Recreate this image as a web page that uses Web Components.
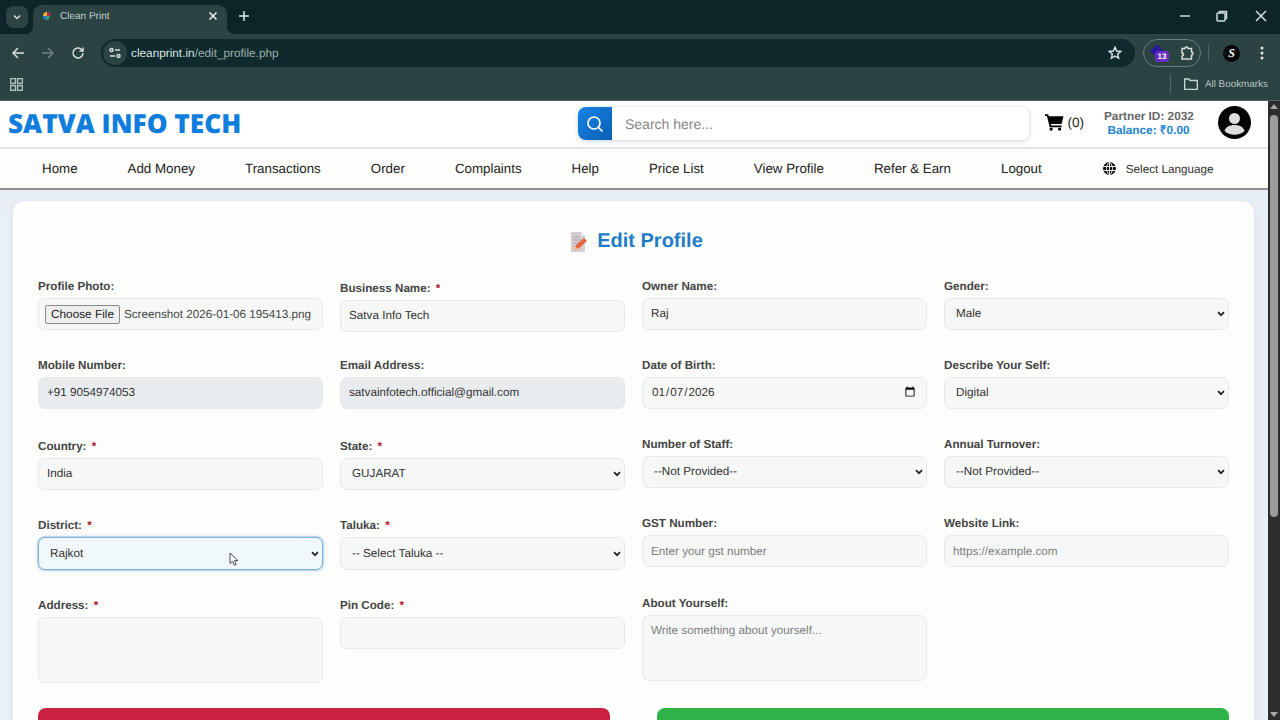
<!DOCTYPE html>
<html lang="en">
<head>
<meta charset="utf-8">
<title>Clean Print</title>
<style>
  html, body { margin: 0; height: 720px; overflow: hidden; background: #e9f0f5; font-family: "Liberation Sans", Arial, sans-serif; text-rendering: geometricPrecision; }
  body { display: flex; flex-direction: column; }
</style>
</head>
<body>
<browser-chrome></browser-chrome>
<page-frame>
  <site-header></site-header>
  <site-nav></site-nav>
  <edit-profile></edit-profile>
</page-frame>

<script>
class BrowserChrome extends HTMLElement {
  connectedCallback() {
    this.attachShadow({ mode: 'open' });
    this.shadowRoot.innerHTML = `
      <style>
        :host { display: block; flex: none; height: 101px; background: #2b4343; color: #d5dede; font-size: 12px; border-bottom: 1px solid #4f6666; box-sizing: border-box; }
        svg { display: block; flex: none; fill: none; stroke: currentColor; stroke-width: 1.5; }
        .strip { height: 34px; background: #0b2528; display: flex; align-items: flex-end; padding-left: 6px; }
        .list { width: 22px; height: 22px; margin-bottom: 6px; border-radius: 7px; background: #2b4343; display: flex; align-items: center; justify-content: center; }
        .tab { position: relative; width: 194px; height: 29px; margin-left: 5px; box-sizing: border-box; padding: 0 9px 7px 9px; background: #2b4343; border-radius: 9px 9px 0 0; display: flex; align-items: center; gap: 8px; color: #c5d0d0; font-size: 10px; }
        .tab::before, .tab::after { content: ""; position: absolute; bottom: 0; width: 8px; height: 8px; }
        .tab::before { left: -8px; background: radial-gradient(circle at 0 0, #0b2528 8px, #2b4343 8.5px); }
        .tab::after { right: -8px; background: radial-gradient(circle at 100% 0, #0b2528 8px, #2b4343 8.5px); }
        .tab span { flex: 1; padding-top: 1px; }
        .plus { margin: 0 0 13px 12px; }
        .win { margin: 0 13px 12px auto; display: flex; align-items: center; }
        .bar { height: 38px; display: flex; align-items: center; padding-left: 11px; }
        .nav-btn { width: 30px; display: flex; }
        .omni { width: 1034px; height: 28px; box-sizing: border-box; border-radius: 14px; background: #0f2a2d; display: flex; align-items: center; padding: 0 13px 0 2px; }
        .info { width: 24px; height: 24px; border-radius: 50%; background: #2b4343; display: flex; align-items: center; justify-content: center; margin-right: 4px; }
        .url { flex: 1; font-size: 11.8px; color: #9fb0b0; }
        .url b { font-weight: 400; color: #dbe3e3; }
        .ext { margin-left: 8px; width: 58px; height: 28px; box-sizing: border-box; border: 1px solid #687e7e; border-radius: 14px; display: flex; align-items: center; justify-content: space-between; padding: 0 5px 0 7px; }
        .gem { position: relative; width: 16px; height: 16px; }
        .gem i { position: absolute; left: 0; top: 0; width: 12px; height: 12px; background: #2b1a9c; transform: rotate(45deg) scale(.8); }
        .gem em { position: absolute; left: 4px; top: 6px; width: 14px; height: 11px; border-radius: 3px; background: #6a2fc0; color: #fff; font: 700 8px/11px "Liberation Sans", sans-serif; text-align: center; }
        .sep { width: 1px; height: 16px; background: #4d6464; margin-left: 7px; }
        .me { margin-left: 14px; width: 17px; height: 17px; border-radius: 50%; background: #050505; color: #fff; font: italic 700 12px/17px "Liberation Serif", serif; text-align: center; }
        .dots { margin-left: 20px; }
        .marks { height: 24px; display: flex; align-items: center; padding: 0 12px 0 10px; }
        .marks .sep { margin-left: auto; margin-right: 13px; height: 18px; }
        .marks span { margin-left: 7px; font-size: 9.9px; color: #b7c4c4; }
      </style>
      <div class="strip">
        <div class="list"><svg width="10" height="10" viewBox="0 0 10 10" stroke-width="1.8"><path d="M2 3.5 5 6.5 8 3.5"/></svg></div>
        <div class="tab">
          <svg width="10" height="10" viewBox="0 0 10 10" style="stroke:none"><path fill="#e0b92c" d="M1 5a4 4 0 0 1 4-4v4z"/><path fill="#b02a5a" d="M5 1a4 4 0 0 1 4 4H5z"/><path fill="#2e7dbd" d="M1 5h4v4a4 4 0 0 1-4-4z"/><path fill="#36a46a" d="M5 5h2.5a2.5 4 0 0 1-2.500 4z"/></svg>
          <span>Clean Print</span>
          <svg width="10" height="10" viewBox="0 0 10 10" stroke-width="1.6" style="color:#eef3f3"><path d="M1.500 1.500 8.500 8.500M8.500 1.500 1.500 8.500"/></svg>
        </div>
        <svg class="plus" style="color:#e4ebeb" width="10" height="10" viewBox="0 0 10 10" stroke-width="1.600"><path d="M5 0v10M0 5h10"/></svg>
        <div class="win">
          <svg width="12" height="12" viewBox="0 0 12 12" stroke-width="1"><path d="M1 6h10"/></svg>
          <svg width="12" height="12" viewBox="0 0 12 12" stroke-width="1" style="margin:0 27px 0 25px"><rect x="1" y="3" width="8" height="8" rx="1"/><path d="M3.500 3V1.500h7v7H9"/></svg>
          <svg width="12" height="12" viewBox="0 0 12 12" stroke-width="1"><path d="M1 1 11 11M11 1 1 11"/></svg>
        </div>
      </div>
      <div class="bar">
        <div class="nav-btn"><svg width="14" height="14" viewBox="0 0 14 14"><path d="M13 7H2M7 2 2 7l5 5"/></svg></div>
        <div class="nav-btn" style="color:#6d8383"><svg width="14" height="14" viewBox="0 0 14 14"><path d="M1 7h11M7 2l5 5-5 5"/></svg></div>
        <div class="nav-btn"><svg width="14" height="14" viewBox="0 0 14 14"><path d="M12 7a5 5 0 1 1-1.500-3.600L12 5M12 1.500V5H8.500"/></svg></div>
        <div class="omni">
          <div class="info"><svg width="12" height="12" viewBox="0 0 12 12" stroke-width="1.200"><circle cx="2.500" cy="3" r="1.500"/><path d="M6 3h5M1 9h5"/><circle cx="9.500" cy="9" r="1.500"/></svg></div>
          <div class="url"><b>cleanprint.in</b>/edit_profile.php</div>
          <svg width="14" height="14" viewBox="0 0 14 14" stroke-width="1.300"><path d="M7 1.300 8.700 5l4 .4-3 2.700.900 4L7 10l-3.600 2.100.9-4-3-2.700 4-.4z"/></svg>
        </div>
        <div class="ext">
          <div class="gem"><i></i><em>13</em></div>
          <svg width="16" height="16" viewBox="0 0 16 16" stroke-width="1.300"><path d="M3 3.500h3a1.500 1.500 0 0 1 3 0h3.500V7a1.500 1.500 0 0 1 0 3v4H3v-3a1.500 1.500 0 0 0 0-3z"/></svg>
        </div>
        <div class="sep"></div>
        <div class="me">S</div>
        <svg class="dots" width="4" height="14" viewBox="0 0 4 14" style="stroke:none;fill:#dfe7e7"><circle cx="2" cy="2" r="1.500"/><circle cx="2" cy="7" r="1.500"/><circle cx="2" cy="12" r="1.500"/></svg>
      </div>
      <div class="marks">
        <svg width="13" height="13" viewBox="0 0 13 13" stroke-width="1.200" style="color:#aebcbc"><rect x=".6" y=".6" width="4.800" height="4.800"/><rect x="7.600" y=".6" width="4.800" height="4.800"/><rect x=".6" y="7.600" width="4.800" height="4.800"/><rect x="7.600" y="7.600" width="4.800" height="4.800"/></svg>
        <div class="sep"></div>
        <svg width="14" height="12" viewBox="0 0 14 12" stroke-width="1.100" style="color:#c8d3d3"><path d="M.6 1h4.200l1.300 1.500h7.300v8.900H.6z"/></svg>
        <span>All Bookmarks</span>
      </div>`;
  }
}

// page area next to the fake scrollbar
class PageFrame extends HTMLElement {
  connectedCallback() {
    this.attachShadow({ mode: 'open' });
    this.shadowRoot.innerHTML = `
      <style>
        :host { display: flex; flex: 1; min-height: 0; }
        .page { flex: 1; min-width: 0; overflow: hidden; background: #e9f0f5; }
        .track { flex: none; width: 12px; background: #2c2c2c; display: flex; flex-direction: column; align-items: center; justify-content: space-between; padding: 3px 0; box-sizing: border-box; position: relative; }
        .track i { width: 0; height: 0; border: 4px solid transparent; border-top: 0; border-bottom: 5px solid #a5a5a5; }
        .track i:last-child { transform: rotate(180deg); }
        .thumb { flex: none; position: absolute; top: 14px; left: 2px; width: 8px; height: 402px; border-radius: 4px; background: #9c9c9c; }
      </style>
      <div class="page"><slot></slot></div>
      <div class="track"><i></i><div class="thumb"></div><i></i></div>`;
  }
}

class SiteHeader extends HTMLElement {
  connectedCallback() {
    this.attachShadow({ mode: 'open' });
    this.shadowRoot.innerHTML = `
      <style>
        :host { display: flex; align-items: center; height: 48px; box-sizing: border-box; border-bottom: 2px solid #e4e4e4; background: #fff; padding-left: 8px; }
        .logo { width: 570px; flex: none; margin-bottom: 2px; font: 800 26.2px/1 "Open Sans", sans-serif; color: #0f7ddb; white-space: nowrap; }
        .search { width: 451px; height: 33px; flex: none; margin-bottom: 1px; display: flex; border-radius: 8px; box-shadow: 0 1px 5px rgba(40,90,140,.28); background: #fff; }
        .search button { width: 34px; border: 0; padding: 0; border-radius: 8px 0 0 8px; background: linear-gradient(135deg, #1884e6, #0a5fb4); color: #fff; display: flex; align-items: center; justify-content: center; }
        .search input { flex: 1; min-width: 0; border: 0; outline: 0; background: none; padding: 0 13px; font: 14px "Liberation Sans", sans-serif; color: #333; text-rendering: geometricPrecision; }
        .search input::placeholder { color: #868686; }
        .cart { margin: 0 0 4px 16px; width: 39px; flex: none; display: flex; align-items: center; gap: 4px; font-size: 13.5px; color: #222; }
        .partner { margin: 0 0 2px 20px; width: 89px; flex: none; text-align: center; font-size: 11.8px; font-weight: 700; line-height: 14px; color: #666; white-space: nowrap; }
        .partner div { color: #2384cf; }
        .avatar { margin: 0 0 4px 25px; flex: none; display: block; }
      </style>
      <div class="logo">SATVA INFO TECH</div>
      <div class="search">
        <button aria-label="Search"><svg width="18" height="18" viewBox="0 0 18 18" fill="none" stroke="currentColor" stroke-width="1.700"><circle cx="8" cy="8" r="6"/><path d="m12.500 12.500 4 4"/></svg></button>
        <input placeholder="Search here...">
      </div>
      <div class="cart">
        <svg width="19" height="17" viewBox="0 0 19 17"><path fill="#050505" d="M0 0h3.300l.6 2H19l-2 8H6l.4 1.700H17v1.800H4.900L2 1.800H0z"/><circle cx="6.300" cy="15.300" r="1.700"/><circle cx="15" cy="15.300" r="1.700"/></svg>
        <span>(0)</span>
      </div>
      <div class="partner">Partner ID: 2032<div>Balance: ₹0.00</div></div>
      <svg class="avatar" width="33" height="33" viewBox="0 0 33 33"><circle cx="16.500" cy="16.500" r="16.500" fill="#040404"/><circle cx="16.500" cy="12.500" r="5.500" fill="#dedede"/><path fill="#dedede" d="M6.500 25c1-4 5-6 10-6s9 2 10 6c-2.500 2.500-6 3.800-10 3.800S9 27.500 6.500 25z"/></svg>`;
  }
}

class SiteNav extends HTMLElement {
  connectedCallback() {
    const links = ['Home', 'Add Money', 'Transactions', 'Order', 'Complaints', 'Help', 'Price List', 'View Profile', 'Refer & Earn', 'Logout'];
    this.attachShadow({ mode: 'open' });
    this.shadowRoot.innerHTML = `
      <style>
        :host { display: flex; align-items: center; gap: 50px; height: 41px; box-sizing: border-box; padding-left: 42px; border-bottom: 2px solid #8f8f8f; background: #fdfefc; font-size: 13.33px; color: #222; }
        a { color: inherit; text-decoration: none; white-space: nowrap; }
        .lang { margin-left: 11px; display: flex; align-items: center; gap: 10px; font-size: 11.7px; color: #333; }
        .lang span { padding-top: 1px; }
      </style>
      ${links.map(l => `<a href="#">${l.replace('&', '&amp;')}</a>`).join('')}
      <div class="lang">
        <svg width="13" height="13" viewBox="0 0 13 13"><circle cx="6.500" cy="6.500" r="6.500" fill="#111"/><path fill="none" stroke="#fdfefc" stroke-width=".9" d="M0 4.500h13M0 8.500h13M6.500 0v13M6.500 0c-4 3.500-4 9.500 0 13M6.500 0c4 3.500 4 9.500 0 13"/></svg>
        <span>Select Language</span>
      </div>`;
  }
}

class FormField extends HTMLElement {
  connectedCallback() {
    const req = this.hasAttribute('required');
    this.attachShadow({ mode: 'open' });
    this.shadowRoot.innerHTML = `
      <style>
        :host { display: flex; flex-direction: column; gap: 3px; }
        label { padding-top: 1px; font-size: 11.65px; line-height: 16px; font-weight: 700; color: #444; }
        b { color: #b5142f; margin-left: 2px; }
      </style>
      <label>${this.getAttribute('label')}${req ? '<b>*</b>' : ''}</label>
      <slot></slot>`;
  }
}

class EditProfile extends HTMLElement {
  connectedCallback() {
    this.attachShadow({ mode: 'open' });
    this.shadowRoot.innerHTML = `
      <style>
        :host { display: block; margin: 11px 14px 0 13px; padding: 25px 25px 0; border-radius: 12px; background: #fdfefc; box-shadow: 0 2px 8px rgba(60,100,140,.10); position: relative; }
        h1 { margin: 0 0 22px; height: 29px; padding: 1px 0 0 6px; display: flex; align-items: center; justify-content: center; gap: 9px; font-size: 20px; font-weight: 700; color: #1f7cc7; }
        .grid { display: grid; grid-template-columns: repeat(4, 285px); column-gap: 17px; align-items: start; }
        .col { display: flex; flex-direction: column; gap: 27px; }
        .ctl { display: block; width: 100%; height: 32px; box-sizing: border-box; margin: 0; border: 1px solid #e6e9e8; border-radius: 7px; background: #f6f8f7; padding: 0 8px 2px; font: 11.7px "Liberation Sans", sans-serif; color: #333; outline: 0; text-rendering: geometricPrecision; }
        .ctl:placeholder-shown { padding-bottom: 0; }
        select.ctl { appearance: none; padding-left: 11px; background-image: url("data:image/svg+xml,%3Csvg xmlns='http://www.w3.org/2000/svg' width='8' height='6' viewBox='0 0 8 6'%3E%3Cpath d='M1 1.200 4 4.200 7 1.200' fill='none' stroke='%23222' stroke-width='1.700'/%3E%3C/svg%3E"); background-repeat: no-repeat; background-position: right 3px center; }
        .ctl::placeholder { color: #7d7d7d; }
        .ctl[disabled] { background: #e9ecef; color: #333; opacity: 1; }
        .tall, .tall:placeholder-shown { height: 66px; padding: 8px; resize: none; }
        .file { display: flex; align-items: center; gap: 4px; white-space: nowrap; padding: 0 6px; color: #444; }
        .file button { height: 19px; padding: 0 5px; border: 1px solid #8a8a8a; border-radius: 2px; background: #efefef; font: 11.8px "Liberation Sans", sans-serif; color: #222; text-rendering: geometricPrecision; }
        select.focus { height: 33px; padding-bottom: 0; border-color: #7db0da; background-color: #f1f8fb; box-shadow: 0 0 0 1px rgba(125,176,218,.35), 0 0 4px rgba(125,176,218,.5); }
        select.h33 { height: 33px; padding-bottom: 0; }
        .cursor { position: absolute; left: 216px; top: 351px; }
        .actions { display: grid; grid-template-columns: 572px 572px; column-gap: 47px; margin-top: 25px; }
        .actions div { height: 44px; border-radius: 8px; }
        .red { background: #c9213f; }
        .green { background: #2eb446; }
      </style>
      <h1>
        <svg width="18" height="20" viewBox="0 0 18 20"><path fill="#d6ced4" d="M1 0h10l4 4v16H1z"/><path fill="#efe9ec" d="M11 0l4 4h-4z"/><path stroke="#a9a1aa" stroke-width="1" d="M3 5h7M3 8h9M3 11h6"/><path fill="#e8663c" d="M5 14 14 6l3 3-9 8-4 1z"/><path fill="#f3c9a5" d="M5 14l3 3-4 1z"/></svg>
        Edit Profile
      </h1>
      <div class="grid">
        <div class="col">
          <form-field label="Profile Photo:"><div class="ctl file"><button type="button">Choose File</button><span>Screenshot 2026-01-06 195413.png</span></div></form-field>
          <form-field label="Mobile Number:"><input class="ctl" disabled value="+91 9054974053"></form-field>
          <form-field label="Country: " required style="margin-top:2px"><input class="ctl" value="India"></form-field>
          <form-field label="District: " required><select class="ctl focus"><option>Rajkot</option></select></form-field>
          <form-field label="Address: " required><textarea class="ctl tall"></textarea></form-field>
        </div>
        <div class="col" style="padding-top:2px">
          <form-field label="Business Name: " required><input class="ctl" value="Satva Info Tech"></form-field>
          <form-field label="Email Address:" style="margin-top:-2px"><input class="ctl" disabled value="satvainfotech.official@gmail.com"></form-field>
          <form-field label="State: " required style="margin-top:2px"><select class="ctl"><option>GUJARAT</option></select></form-field>
          <form-field label="Taluka: " required><select class="ctl h33"><option>-- Select Taluka --</option></select></form-field>
          <form-field label="Pin Code: " required><input class="ctl"></form-field>
        </div>
        <div class="col">
          <form-field label="Owner Name:"><input class="ctl" value="Raj"></form-field>
          <form-field label="Date of Birth:"><input class="ctl" type="date" value="2026-01-07"></form-field>
          <form-field label="Number of Staff:"><select class="ctl"><option>--Not Provided--</option></select></form-field>
          <form-field label="GST Number:"><input class="ctl" placeholder="Enter your gst number"></form-field>
          <form-field label="About Yourself:" style="margin-top:1px"><textarea class="ctl tall" placeholder="Write something about yourself..."></textarea></form-field>
        </div>
        <div class="col">
          <form-field label="Gender:"><select class="ctl"><option>Male</option></select></form-field>
          <form-field label="Describe Your Self:"><select class="ctl"><option>Digital</option></select></form-field>
          <form-field label="Annual Turnover:"><select class="ctl"><option>--Not Provided--</option></select></form-field>
          <form-field label="Website Link:"><input class="ctl" placeholder="https://example.com"></form-field>
        </div>
      </div>
      <div class="actions"><div class="red"></div><div class="green"></div></div>
      <svg class="cursor" width="11" height="15" viewBox="0 0 11 15"><path fill="#fff" stroke="#333" stroke-width=".9" d="M1 1v10.500l2.600-2.200 1.700 4 1.900-.8-1.700-3.900H9z"/></svg>`;
  }
}

customElements.define('browser-chrome', BrowserChrome);
customElements.define('page-frame', PageFrame);
customElements.define('site-header', SiteHeader);
customElements.define('site-nav', SiteNav);
customElements.define('form-field', FormField);
customElements.define('edit-profile', EditProfile);
</script>
</body>
</html>
